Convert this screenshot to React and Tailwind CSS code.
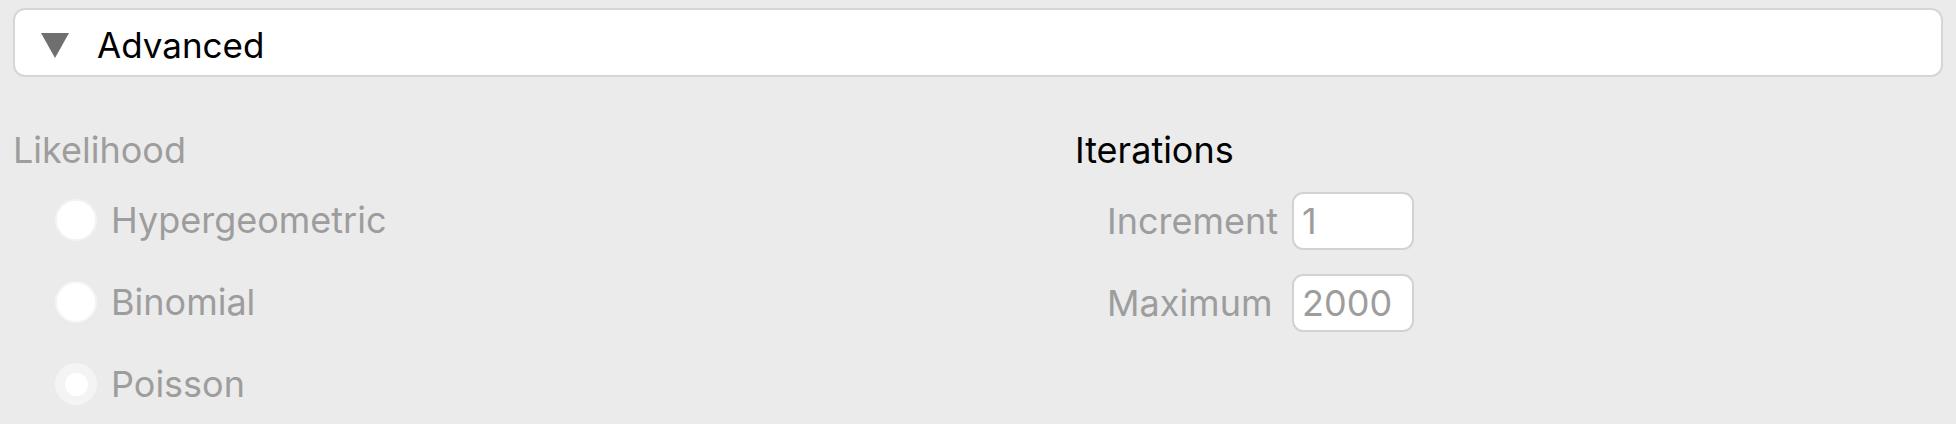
import React, { useState } from 'react';

const font = { fontFamily: 'Inter, "Liberation Sans", sans-serif' };

function Radio({ label, checked }) {
    return (
        <label className="flex items-center h-[82px] pl-[42px]">
            {checked ? (
                <span className="w-[42px] h-[42px] rounded-full bg-[#f4f4f4] flex items-center justify-center">
                    <span className="w-[23px] h-[23px] rounded-full bg-white" />
                </span>
            ) : (
                <span className="w-[42px] h-[42px] rounded-full bg-white border-2 border-[#f4f4f4]" />
            )}
            <span className="ml-[14px] text-[36px] text-[#9d9d9d]">{label}</span>
        </label>
    );
}

function NumberField({ label, value }) {
    return (
        <div className="flex items-center h-[82px]">
            <span className="w-[185px] text-[36px] text-[#9d9d9d]">{label}</span>
            <div className="w-[122px] h-[58px] bg-white border-2 border-[#d2d2d2] rounded-[11px] flex items-center px-[8px] text-[36px] text-[#9d9d9d]">
                {value}
            </div>
        </div>
    );
}

function App() {
    const [open] = useState(true);

    return (
        <div className="w-[1956px] h-[424px] bg-[#ebebeb] overflow-hidden pt-[8px] px-[13px] text-black" style={font}>
            <div className="h-[69px] bg-white border-2 border-[#d6d6d6] rounded-[12px] flex items-center pl-[26px] pt-[5px]">
                <svg width="28" height="25" viewBox="0 0 28 25">
                    <path d="M0 0 H28 L14 25 Z" fill="#6f6f6f" />
                </svg>
                <span className="ml-[28px] text-[35px]">Advanced</span>
            </div>

            {open && (
                <div className="grid grid-cols-[1062px_1fr] mt-[51px]">
                    <div>
                        <div className="text-[36px] text-[#9d9d9d] leading-[44px]">Likelihood</div>
                        <div className="mt-[7px]">
                            <Radio label="Hypergeometric" />
                            <Radio label="Binomial" />
                            <Radio label="Poisson" checked />
                        </div>
                    </div>
                    <div>
                        <div className="text-[36px] leading-[44px]">Iterations</div>
                        <div className="pl-[32px] mt-[8px]">
                            <NumberField label="Increment" value="1" />
                            <NumberField label="Maximum" value="2000" />
                        </div>
                    </div>
                </div>
            )}
        </div>
    );
}

export default App;
